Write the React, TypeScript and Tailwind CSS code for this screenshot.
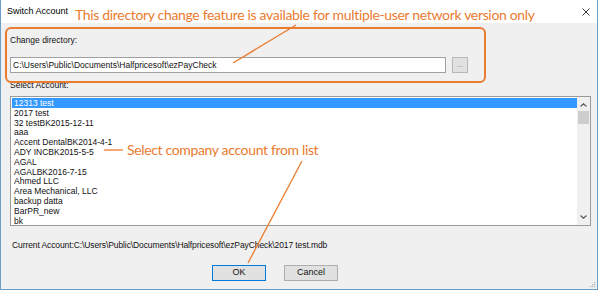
import React from "react";

const accounts = [
  "12313 test",
  "2017 test",
  "32 testBK2015-12-11",
  "aaa",
  "Accent DentalBK2014-4-1",
  "ADY INCBK2015-5-5",
  "AGAL",
  "AGALBK2016-7-15",
  "Ahmed LLC",
  "Area Mechanical, LLC",
  "backup datta",
  "BarPR_new",
  "bk",
];

const ui = { fontFamily: '"Liberation Sans", Arial, sans-serif' };
const note = { fontFamily: 'Lato, "Open Sans", sans-serif' };

export default function App() {
  return (
    <div className="relative w-[600px] h-[291px] bg-white overflow-hidden" style={ui}>
      {/* dialog window */}
      <div className="w-[598px] h-[290px] border-l border-r border-b border-[#6a9fca] flex flex-col">
        <div className="h-[23px] bg-white flex items-center justify-between pl-[6px] pr-[7px]">
          <span className="text-[9px] text-black">Switch Account</span>
          <svg width="8" height="8" viewBox="0 0 8 8">
            <path d="M0.5 0.5 L7.5 7.5 M7.5 0.5 L0.5 7.5" stroke="#222" strokeWidth="0.9" />
          </svg>
        </div>

        <div className="relative flex-1 bg-[#f0f0f0] pl-[9px] text-[8.5px] text-[#111]">
          <div className="pt-[11px] leading-[12px]">Change directory:</div>

          <div className="mt-[11px] flex items-center">
            <div className="w-[436px] h-[16px] bg-white border border-[#a0a0a0] px-[2px] leading-[14px]">
              C:\Users\Public\Documents\Halfpricesoft\ezPayCheck
            </div>
            <div className="ml-[6px] w-[16px] h-[16px] bg-[#e1e1e1] border border-[#b8b8b8] flex items-center justify-center text-[8px] leading-none text-[#888]">
              ...
            </div>
          </div>

          <div className="mt-[6px] leading-[12px]">Select Account:</div>

          <div className="mt-[5px] w-[581px] h-[130px] bg-white border border-[#9a9a9a] flex">
            <div className="flex-1 pt-[1px] pl-[1px] overflow-hidden">
              {accounts.map((a, i) => (
                <div
                  key={a}
                  className={`h-[9.8px] leading-[10px] pl-[2px] ${i === 0 ? "bg-[#3399ff] text-white" : ""}`}
                >
                  {a}
                </div>
              ))}
            </div>
            <div className="w-[13px] bg-[#f0f0f0] flex flex-col items-center">
              <svg className="mt-[6px]" width="7" height="4" viewBox="0 0 7 4">
                <path d="M0.5 3.5 L3.5 0.8 L6.5 3.5" stroke="#555" strokeWidth="1.1" fill="none" />
              </svg>
              <div className="mt-[4px] w-[11px] h-[13px] bg-[#cdcdcd]" />
              <div className="flex-1" />
              <svg className="mb-[6px]" width="7" height="4" viewBox="0 0 7 4">
                <path d="M0.5 0.5 L3.5 3.2 L6.5 0.5" stroke="#555" strokeWidth="1.1" fill="none" />
              </svg>
            </div>
          </div>

          <div className="mt-[13px] pl-[2px] leading-[12px] tracking-[-0.1px]">
            Current Account:C:\Users\Public\Documents\Halfpricesoft\ezPayCheck\2017 test.mdb
          </div>

          <div className="mt-[14px] ml-[202px] flex gap-[18px]">
            <div className="w-[54px] h-[16px] bg-[#e1e1e1] border border-[#0078d7] flex items-center justify-center text-[9px]">
              OK
            </div>
            <div className="w-[54px] h-[16px] bg-[#e1e1e1] border border-[#adadad] flex items-center justify-center text-[9px]">
              Cancel
            </div>
          </div>

          {/* resize grip */}
          <svg className="absolute right-[1px] bottom-[1px]" width="6" height="6" viewBox="0 0 6 6">
            <rect x="4" y="0" width="1.2" height="1.2" fill="#b5b5b5" />
            <rect x="2" y="2" width="1.2" height="1.2" fill="#b5b5b5" />
            <rect x="4" y="2" width="1.2" height="1.2" fill="#b5b5b5" />
            <rect x="0" y="4" width="1.2" height="1.2" fill="#b5b5b5" />
            <rect x="2" y="4" width="1.2" height="1.2" fill="#b5b5b5" />
            <rect x="4" y="4" width="1.2" height="1.2" fill="#b5b5b5" />
          </svg>
        </div>
      </div>

      {/* annotations */}
      <div className="absolute left-[5px] top-[27px] w-[481px] h-[56px] border-2 border-[#ea7b2f] rounded-[6px]" />
      <div className="absolute left-[75px] top-[5px] text-[14px] leading-[20px] text-[#ea7b2f] tracking-[-0.33px]" style={note}>
        This directory change feature is available for multiple-user network version only
      </div>
      <div className="absolute left-[127px] top-[140px] text-[14px] leading-[20px] text-[#ea7b2f] tracking-[-0.35px]" style={note}>
        Select company account from list
      </div>
      <svg className="absolute left-0 top-0 pointer-events-none" width="600" height="291" viewBox="0 0 600 291">
        <line x1="233" y1="63" x2="296" y2="25" stroke="#ea7b2f" strokeWidth="1.3" />
        <line x1="104" y1="150" x2="123" y2="150" stroke="#ea7b2f" strokeWidth="1.3" />
        <line x1="248" y1="263" x2="302" y2="161" stroke="#ea7b2f" strokeWidth="1.3" />
      </svg>
    </div>
  );
}
